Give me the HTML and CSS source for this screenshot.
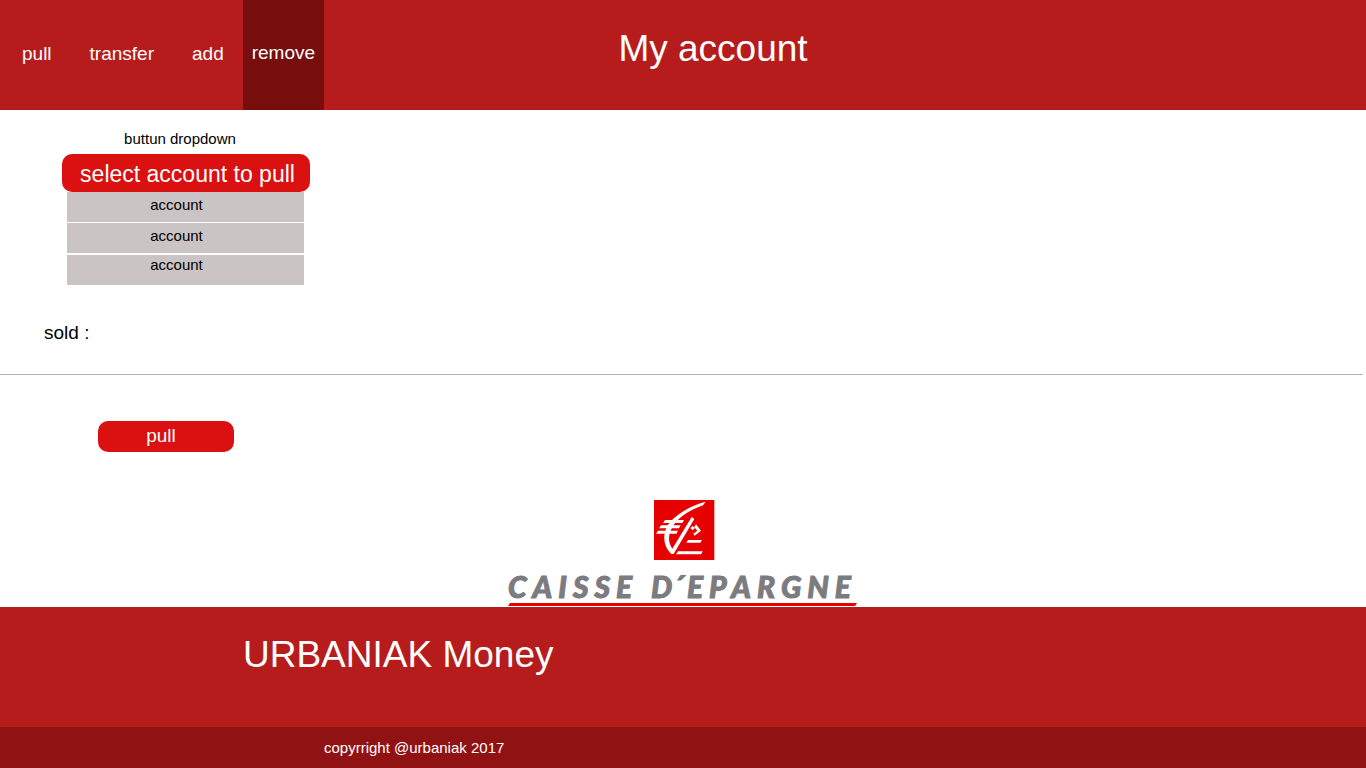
FILE: index.html
```html
<!DOCTYPE html>
<html lang="en">
<head>
<meta charset="utf-8">
<title>My account</title>
<meta name="viewport" content="width=device-width, initial-scale=1">
<link rel="stylesheet" href="styles.css">
</head>
<body>
<header class="header">
  <nav class="nav">
    <a class="nav-link" href="#pull">pull</a>
    <a class="nav-link" href="#transfer">transfer</a>
    <a class="nav-link" href="#add">add</a>
    <a class="nav-link nav-link-active" href="#remove" aria-current="page">remove</a>
  </nav>
  <h1 class="title">My account</h1>
</header>
<main class="main">
  <section class="picker">
    <p class="picker-label" id="picker-label">buttun dropdown</p>
    <button class="picker-toggle" type="button" aria-expanded="true" aria-describedby="picker-label">select account to pull</button>
    <ul class="picker-list">
      <li><button class="picker-option" type="button">account</button></li>
      <li><button class="picker-option" type="button">account</button></li>
      <li class="picker-last"><button class="picker-option" type="button">account</button></li>
    </ul>
  </section>
  <p class="balance">sold :</p>
  <hr class="divider">
  <button class="submit" type="button">pull</button>
  <svg class="logo" viewBox="0 0 350 107" role="img" aria-label="Caisse d'Epargne">
    <svg x="146" y="0" width="61" height="60" viewBox="42 30 183 180">
      <path fill="#e60000" d="M42 30h181v180H42z"/>
      <path fill="#fff" d="M197 35C155 46 116 68 92 94C66 124 66 166 94 192H101L163 87L155 81L97 176C82 156 84 128 103 102C122 77 153 59 189 46Z"/>
      <path fill="#fff" d="M75 90h57l-5 9H69zM63 106h59l-5 9H57zM54 122h60l-5 9H48zM144 150h42l-5 8h-42zM114 184h74l-5 9h-75z"/>
      <path fill="#fff" d="M151 114l7-6 7 6-7 7zM168 103l15 19-19 15-4-6 12-9-9-11z"/>
    </svg>
    <text class="logo-name" x="0" y="98">CAISSE</text>
    <text class="logo-name logo-prefix" x="143" y="98">D´</text>
    <text class="logo-name" x="179" y="98">EPARGNE</text>
    <path fill="#e60000" d="M2 103h347l-2 3H0z"/>
  </svg>
</main>
<footer class="footer">
  <p class="brand">URBANIAK Money</p>
  <p class="copyright">copyrright @urbaniak 2017</p>
</footer>
</body>
</html>
```

FILE: styles.css
```css
* {
  box-sizing: border-box;
}

body {
  margin: 0;
  min-height: 100vh;
  display: flex;
  flex-direction: column;
  background: #fff;
  color: #000;
  font-family: "Liberation Sans", Arial, sans-serif;
  font-size: 15px;
  line-height: 20px;
}

p,
h1,
ul {
  margin: 0;
  padding: 0;
  font-weight: 400;
}

button {
  display: block;
  border: 0;
  font: inherit;
  color: inherit;
  cursor: pointer;
}

.header {
  display: grid;
  grid-template-columns: 324px 1fr 264px;
  min-height: 110px;
  background: #b71c1c;
  color: #fff;
}

.nav {
  display: flex;
  padding-left: 3px;
}

.nav-link {
  display: flex;
  align-items: center;
  padding: 0 19px 2px;
  font-size: 19px;
  color: inherit;
  text-decoration: none;
}

.nav-link-active {
  flex: 1;
  justify-content: center;
  padding: 0 0 4px;
  background: #770d0d;
}

.title {
  padding-top: 29px;
  font-size: 37px;
  line-height: 40px;
  text-align: center;
}

.main {
  flex: 1;
  display: flex;
  flex-direction: column;
  align-items: flex-start;
  padding-top: 19px;
}

.picker {
  width: 248px;
  margin-left: 62px;
}

.picker-label {
  padding: 0 12px 5px 0;
  text-align: center;
}

.picker-toggle {
  width: 100%;
  padding: 7px 0 5px 3px;
  border-radius: 10px;
  background: #db1010;
  color: #fff;
  font-size: 23px;
  line-height: 26px;
}

.picker-list {
  display: grid;
  gap: 1px;
  margin: 0 6px 0 5px;
  list-style: none;
}

.picker-option {
  width: 100%;
  padding: 3px 18px 7px 0;
  background: #cac4c4;
}

.picker-last {
  padding-top: 1px;
}

.picker-last .picker-option {
  padding: 0 18px 10px 0;
}

.balance {
  margin: 38px 0 31px 44px;
  font-size: 19px;
}

.divider {
  align-self: stretch;
  margin: 0 3px 46px 0;
  border: 0;
  border-top: 1px solid #b8b0b0;
}

.submit {
  width: 136px;
  margin: 0 0 48px 98px;
  padding: 5px 10px 6px 0;
  border-radius: 10px;
  background: #db1010;
  color: #fff;
  font-size: 19px;
}

.logo {
  display: block;
  align-self: center;
  width: 350px;
  margin-top: auto;
  overflow: visible;
}

.logo-name {
  fill: #7b7b80;
  stroke: #7b7b80;
  stroke-width: 1px;
  font-family: Lato, "Open Sans", sans-serif;
  font-size: 30px;
  font-style: italic;
  font-weight: 900;
  letter-spacing: 6px;
}

.logo-prefix {
  letter-spacing: 0;
}

.footer {
  background: #b71c1c;
  color: #fff;
}

.brand {
  padding: 28px 20px 52px 243px;
  font-size: 37px;
  line-height: 40px;
}

.copyright {
  padding: 11px 20px 10px 324px;
  background: #911212;
}
```
